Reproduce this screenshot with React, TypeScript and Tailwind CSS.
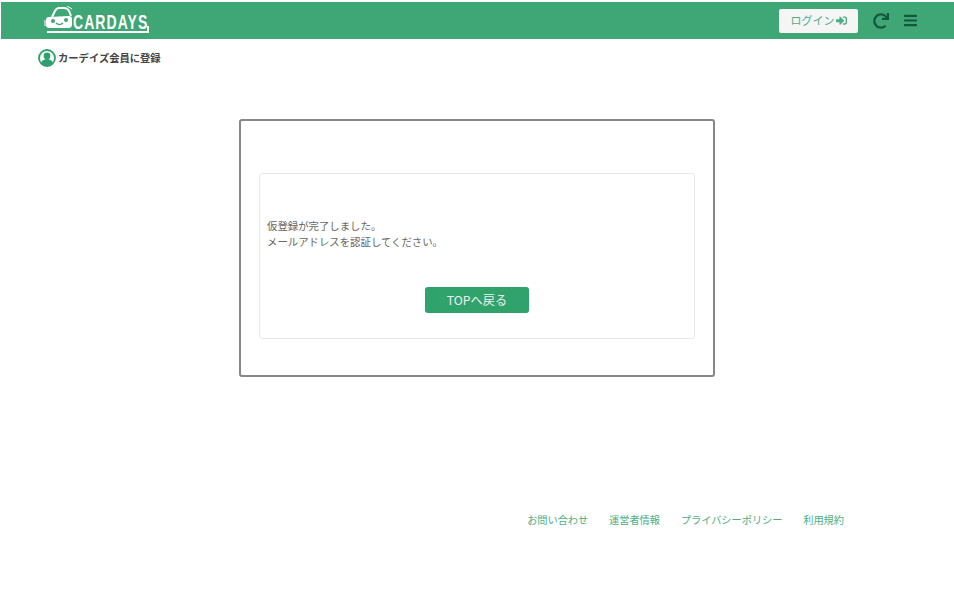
import { FaBars, FaRedo, FaSignInAlt } from "react-icons/fa";

const footerLinks = ["お問い合わせ", "運営者情報", "プライバシーポリシー", "利用規約"];

function Logo() {
  return (
    <div className="relative h-[28px] w-[106px]">
      <svg viewBox="0 0 30 24" className="absolute top-[-1px] left-0 h-[24px] w-[30px]" fill="none">
        <path d="M8 11l3-6c1-2 2-3 4-3h5c3 0 4 1 5 3l2 5" stroke="#fff" strokeWidth="2" />
        <path d="M5 11c-2 0-3 1-3 3v5c0 2 1 3 3 3h19c3 0 4-1 4-4v-5c0-2-1-3-3-3z" fill="#fff" />
        <circle cx="9" cy="15" r="2" fill="#3fa676" />
        <circle cx="22" cy="14" r="2" fill="#3fa676" />
        <path d="M12 17c2 2 5 2 7 0" stroke="#3fa676" strokeWidth="1.5" />
        <path d="M23 0l5 3M1 14v6" stroke="#fff" strokeWidth="1" />
      </svg>
      <span className="absolute top-[4px] left-[29px] origin-left scale-x-[0.7] font-['Liberation_Sans',sans-serif] text-[20px] leading-[22px] font-bold tracking-[1.5px] whitespace-nowrap text-white">
        CARDAYS
      </span>
      <div className="absolute top-[24px] left-[3px] h-[2px] w-[102px] bg-white" />
      <div className="absolute top-[19px] left-[103px] h-[6px] w-[2px] bg-white" />
    </div>
  );
}

export default function App() {
  return (
    <div className="flex min-h-[593px] flex-col bg-white pt-[2px] font-['Noto_Sans_CJK_JP','Noto_Sans',sans-serif] text-[#666]">
      <header className="ml-[1px] flex h-[37px] items-center justify-between bg-[#3fa676] pr-[37px] pl-[43px]">
        <Logo />
        <div className="flex items-center">
          <button className="flex h-[24px] w-[79px] items-center justify-center gap-[1px] rounded-[2px] bg-[#f5f5f5] text-[11px] text-[#4cae82]">
            ログイン
            <FaSignInAlt className="h-[11px] w-[11px]" />
          </button>
          <FaRedo className="ml-[15px] h-[16px] w-[16px] text-[#14583c]" />
          <FaBars className="ml-[15px] h-[15px] w-[13px] text-[#14583c]" />
        </div>
      </header>

      <div className="flex items-center gap-[2px] pt-[10px] pl-[38px]">
        <svg viewBox="0 0 18 18" className="h-[18px] w-[18px]">
          <circle cx="9" cy="9" r="8" fill="#fff" stroke="#2fa06c" strokeWidth="1.8" />
          <circle cx="9" cy="7" r="3.4" fill="#2fa06c" />
          <path d="M3 14c1-3 3.500-4 6-4s5 1 6 4c-1.500 2-3.500 3-6 3s-4.500-1-6-3z" fill="#2fa06c" />
        </svg>
        <h1 className="text-[10.3px] leading-[18px] font-bold text-[#444]">カーデイズ会員に登録</h1>
      </div>

      <main className="mt-[52px] ml-[239px] flex h-[258px] w-[476px] flex-col rounded-[3px] border-[2px] border-[#888] px-[18px] pt-[52px]">
        <section className="flex h-[166px] flex-col rounded-[3px] border border-[#e8e8e8] px-[7px] pt-[44px]">
          <p className="text-[10.4px] leading-[16px] text-[#666]">
            仮登録が完了しました。
            <br />
            メールアドレスを認証してください。
          </p>
          <button className="mx-auto mt-[37px] h-[26px] w-[104px] rounded-[3px] bg-[#30a26c] text-[12.2px] text-[#f0f0f0]">
            TOPへ戻る
          </button>
        </section>
      </main>

      <footer className="mt-[135px] flex justify-end gap-[20.8px] pr-[110px] text-[10.2px] leading-[16px] text-[#4cae82]">
        {footerLinks.map((label) => (
          <a key={label} href="#">
            {label}
          </a>
        ))}
      </footer>
    </div>
  );
}
